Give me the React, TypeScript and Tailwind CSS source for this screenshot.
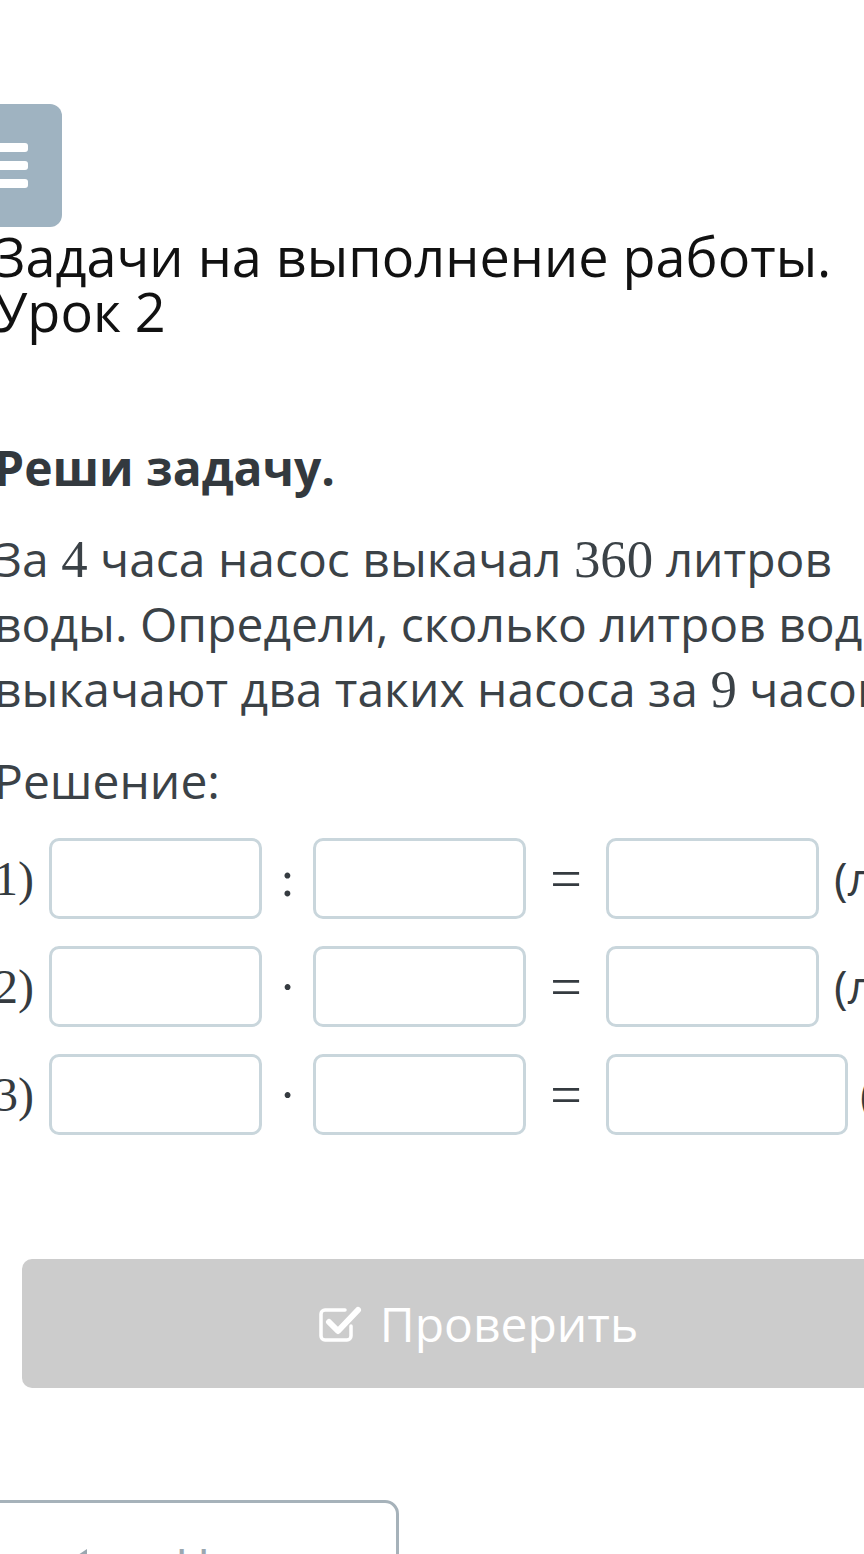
import { ReactNode } from 'react'

const sans = { fontFamily: '"Open Sans", "Noto Sans", sans-serif' }
const serif = { fontFamily: '"Liberation Serif", "DejaVu Serif", serif' }

function Num({ children }: { children: ReactNode }) {
  return <span className="text-[1.1em] leading-none" style={serif}>{children}</span>
}

function Box({ wide }: { wide?: boolean }) {
  return (
    <div
      className={`${wide ? 'w-[242px]' : 'w-[213px]'} h-[81px] shrink-0 rounded-[10px] border-[3px] border-[#c9d6dc] bg-white`}
    />
  )
}

function Row({ label, op, wide }: { label: string; op: string; wide?: boolean }) {
  return (
    <div className="flex items-center whitespace-nowrap">
      <span className="w-[55px] shrink-0 text-[48px] text-[#353b40]" style={serif}>{label}</span>
      <Box />
      <span className="w-[51px] shrink-0 text-center text-[50px] leading-none text-[#353b40]" style={serif}>{op}</span>
      <Box />
      <span className="w-[80px] shrink-0 text-center text-[56px] leading-none text-[#353b40]" style={serif}>=</span>
      <Box wide={wide} />
      <span className={`${wide ? 'ml-[12px]' : 'ml-[15px]'} text-[46px] text-[#353b40]`} style={sans}>(л)</span>
    </div>
  )
}

export default function App() {
  return (
    <div className="h-[1554px] w-[864px] overflow-hidden bg-white" style={sans}>
      <div className="-ml-[6px] w-[1000px] pt-[104px]">
        {/* menu toggle */}
        <div className="-ml-[14px] flex h-[123px] w-[82px] items-center rounded-[12px] bg-[#9fb3c1] pl-[14px]">
          <div className="flex flex-col gap-[9px]">
            <div className="h-[9px] w-[34px] rounded-[3px] bg-white" />
            <div className="h-[9px] w-[34px] rounded-[3px] bg-white" />
            <div className="h-[9px] w-[34px] rounded-[3px] bg-white" />
          </div>
        </div>

        <h1 className="mt-[2px] w-[880px] text-[54px] leading-[55px] text-[#111]">
          Задачи на выполнение работы. Урок 2
        </h1>

        <h2 className="mt-[97px] text-[48px] font-bold leading-[64px] text-[#33393e]">Реши задачу.</h2>

        <p className="mt-[26px] whitespace-nowrap text-[48px] leading-[65px] text-[#3b4247]">
          За <Num>4</Num> часа насос выкачал <Num>360</Num> литров
          <br />
          воды. Определи, сколько литров воды
          <br />
          выкачают два таких насоса за <Num>9</Num> часов?
        </p>

        <p className="mt-[27px] text-[48px] leading-[65px] text-[#3b4247]">Решение:</p>

        <div className="mt-[25px] flex flex-col gap-[27px]">
          <Row label="1)" op=":" />
          <Row label="2)" op="·" />
          <Row label="3)" op="·" wide />
        </div>

        <button className="ml-[28px] mt-[124px] flex h-[129px] w-[950px] items-center justify-center gap-[18px] rounded-[10px] bg-[#cccccc] pr-[38px] text-[48px] text-white">
          <svg width="44" height="40" viewBox="0 0 44 40" fill="none" stroke="white" strokeLinecap="round" strokeLinejoin="round">
            <path d="M33 22v10a4 4 0 0 1-4 4H7a4 4 0 0 1-4-4V10a4 4 0 0 1 4-4h20" strokeWidth="3.5" />
            <path d="M11 18l9 9L40 6" strokeWidth="6" />
          </svg>
          <span>Проверить</span>
        </button>

        <button className="-ml-[20px] mt-[112px] flex h-[120px] w-[425px] items-start rounded-[14px] border-[3px] border-[#a6b2ba] bg-white pl-[80px] pt-[34px] text-[48px] text-[#9aa7b0]">
          <svg width="36" height="40" viewBox="0 0 36 40" className="mt-[8px]" fill="#9aa7b0">
            <path d="M30 4L6 20l24 16z" />
          </svg>
          <span className="ml-[82px] leading-[56px]">Назад</span>
        </button>
      </div>
    </div>
  )
}
